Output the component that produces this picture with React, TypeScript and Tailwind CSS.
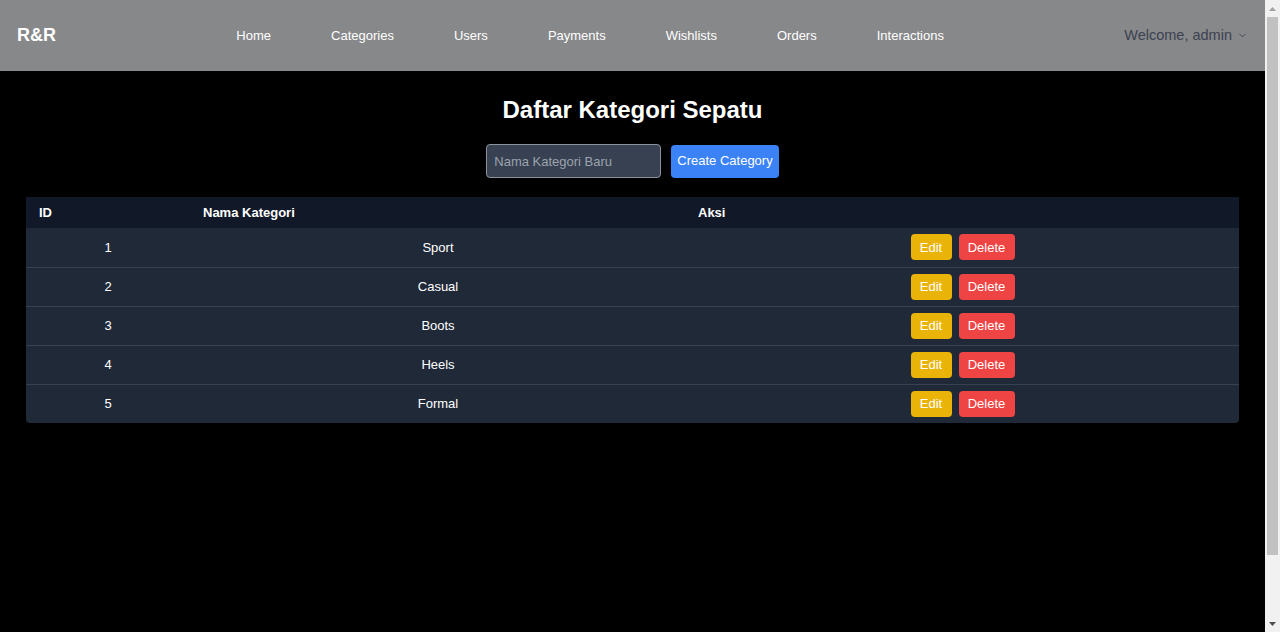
import { ChevronDown } from 'lucide-react'

const categories = [
  { id: 1, name: 'Sport' },
  { id: 2, name: 'Casual' },
  { id: 3, name: 'Boots' },
  { id: 4, name: 'Heels' },
  { id: 5, name: 'Formal' },
]

const links = ['Home', 'Categories', 'Users', 'Payments', 'Wishlists', 'Orders', 'Interactions']

function Navbar() {
  return (
    <nav className="h-[71px] shrink-0 bg-[#87888a] px-[17px] flex items-center justify-between">
      <span className="text-[18px] font-bold text-white">R&amp;R</span>
      <ul className="flex items-center gap-[60px] text-[13px] text-white">
        {links.map((l) => (
          <li key={l}>{l}</li>
        ))}
      </ul>
      <button type="button" className="flex items-center gap-[5px] text-[14.5px] text-[#3b4250]">
        Welcome, admin
        <ChevronDown className="w-[11px] h-[11px]" strokeWidth={2} />
      </button>
    </nav>
  )
}

// Browser scrollbar as it shows in the reference (page is one nav taller than the viewport).
function Scrollbar() {
  return (
    <div className="w-[15px] shrink-0 bg-[#f1f1f1] flex flex-col">
      <div className="h-[17px] flex items-center justify-center">
        <svg width="7" height="4" viewBox="0 0 7 4">
          <path d="M3.5 0L7 4H0z" fill="#a3a3a3" />
        </svg>
      </div>
      <div className="h-[538px] mx-[2px] bg-[#c1c1c1]" />
      <div className="flex-1" />
      <div className="h-[17px] flex items-center justify-center">
        <svg width="7" height="4" viewBox="0 0 7 4">
          <path d="M0 0H7L3.5 4z" fill="#505050" />
        </svg>
      </div>
    </div>
  )
}

export default function App() {
  return (
    <div className="flex h-screen overflow-hidden bg-black" style={{ fontFamily: '"Liberation Sans", Arial, sans-serif' }}>
      <div className="flex-1 min-w-0 flex flex-col">
        <Navbar />
        <main className="flex-1 px-[26px] pt-[23px]">
          <h1 className="text-2xl font-bold text-white text-center">Daftar Kategori Sepatu</h1>

          <div className="mt-[18px] flex items-center justify-center gap-[10px]">
            <input
              type="text"
              placeholder="Nama Kategori Baru"
              className="w-[175px] h-[34px] px-[7px] rounded border border-[#8b929c] bg-[#374151] text-[13px] text-white placeholder:text-[#9ca3af] focus:outline-none"
            />
            <button
              type="button"
              className="h-[33px] px-[6px] rounded bg-[#3b82f6] text-[13px] text-white"
            >
              Create Category
            </button>
          </div>

          <div className="mt-[19px] bg-[#1f2937] rounded-b shadow-lg overflow-hidden">
            <table className="w-full text-[13px] text-white border-collapse">
              <thead className="bg-[#111827]">
                <tr className="h-[31px]">
                  <th className="w-[164px] px-[13px] text-left font-bold">ID</th>
                  <th className="w-[496px] px-[13px] text-left font-bold">Nama Kategori</th>
                  <th className="px-[12px] text-left font-bold">Aksi</th>
                </tr>
              </thead>
              <tbody>
                {categories.map((c, i) => (
                  <tr key={c.id} className={'h-[39px] ' + (i > 0 ? 'border-t border-[#374151]' : '')}>
                    <td className="text-center">{c.id}</td>
                    <td className="text-center">{c.name}</td>
                    <td className="text-center">
                      <div className="flex items-center justify-center gap-[7px]">
                        <button type="button" className="h-[26px] w-[41px] rounded bg-[#eab308] text-white">
                          Edit
                        </button>
                        <button type="button" className="h-[26px] w-[56px] rounded bg-[#ef4444] text-white">
                          Delete
                        </button>
                      </div>
                    </td>
                  </tr>
                ))}
              </tbody>
            </table>
          </div>
        </main>
      </div>
      <Scrollbar />
    </div>
  )
}
